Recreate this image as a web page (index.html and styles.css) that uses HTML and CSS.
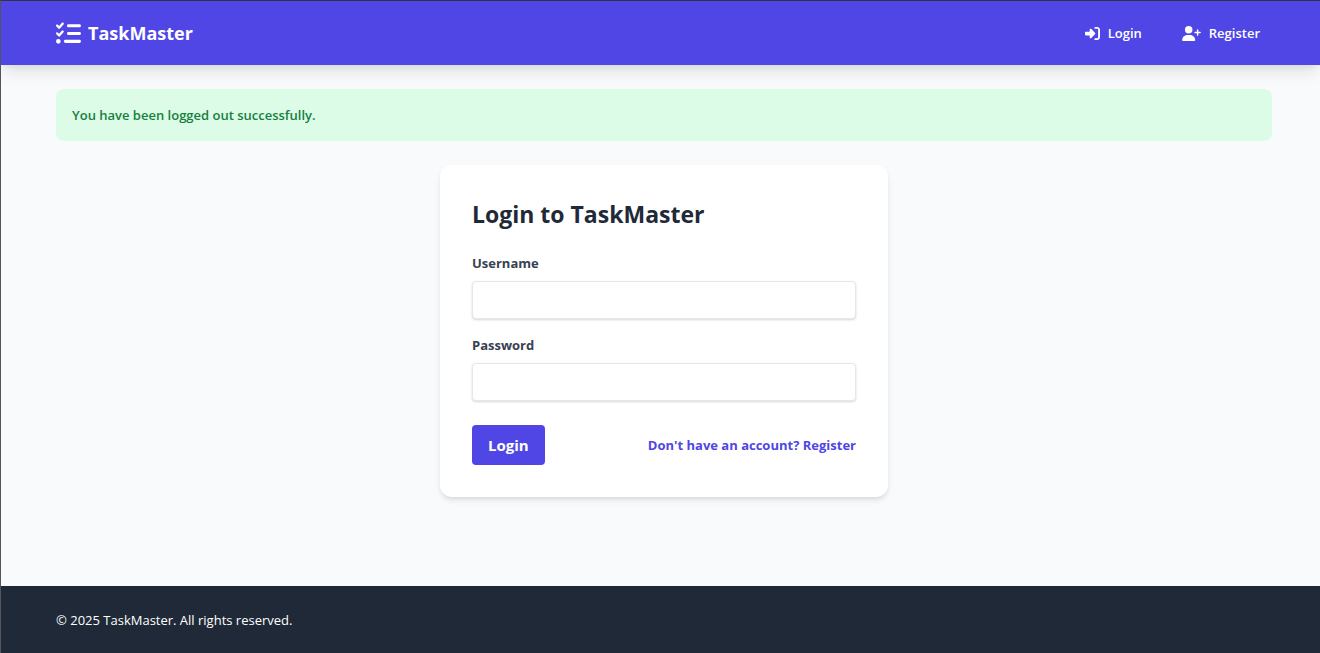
FILE: index.html
```html
<!DOCTYPE html>
<html lang="en">
<head>
<meta charset="utf-8">
<meta name="viewport" content="width=device-width, initial-scale=1">
<title>Login - TaskMaster</title>
<link rel="stylesheet" href="styles.css">
</head>
<body class="page">
<header class="navbar">
  <div class="container navbar-inner">
    <a class="brand" href="#">
      <svg class="brand-icon" viewBox="0 0 512 512" aria-hidden="true"><path d="M152.1 38.2c9.9 8.9 10.7 24 1.8 33.9l-72 80c-4.4 4.9-10.6 7.8-17.2 7.9s-12.9-2.4-17.6-7L7 113C-2.3 103.6-2.3 88.4 7 79s24.6-9.4 33.9 0l22.1 22.1 55.1-61.2c8.9-9.9 24-10.7 33.9-1.8zm0 160c9.9 8.9 10.7 24 1.8 33.9l-72 80c-4.4 4.9-10.6 7.8-17.2 7.9s-12.9-2.4-17.6-7L7 273c-9.4-9.4-9.4-24.6 0-33.9s24.6-9.4 33.9 0l22.1 22.1 55.1-61.2c8.9-9.9 24-10.7 33.9-1.8zM224 96c0-17.7 14.3-32 32-32H480c17.7 0 32 14.3 32 32s-14.3 32-32 32H256c-17.7 0-32-14.3-32-32zm0 160c0-17.7 14.3-32 32-32H480c17.7 0 32 14.3 32 32s-14.3 32-32 32H256c-17.7 0-32-14.3-32-32zM160 416c0-17.7 14.3-32 32-32H480c17.7 0 32 14.3 32 32s-14.3 32-32 32H192c-17.7 0-32-14.3-32-32zM48 368a48 48 0 1 1 0 96 48 48 0 1 1 0-96z"/></svg>
      <span>TaskMaster</span>
    </a>
    <nav class="nav-links">
      <a class="nav-link" href="#">
        <svg class="nav-icon" viewBox="0 0 512 512" aria-hidden="true"><path d="M217.9 105.9L340.7 228.7c7.2 7.2 11.3 17.1 11.3 27.3s-4.1 20.1-11.3 27.3L217.9 406.1c-6.4 6.4-15 9.9-24 9.9c-18.7 0-33.9-15.2-33.9-33.9l0-62.1L32 320c-17.7 0-32-14.3-32-32l0-64c0-17.7 14.3-32 32-32l128 0 0-62.1c0-18.7 15.2-33.9 33.9-33.9c9 0 17.6 3.6 24 9.9zM352 416l64 0c17.7 0 32-14.3 32-32l0-256c0-17.7-14.3-32-32-32l-64 0c-17.7 0-32-14.3-32-32s14.3-32 32-32l64 0c53 0 96 43 96 96l0 256c0 53-43 96-96 96l-64 0c-17.7 0-32-14.3-32-32s14.3-32 32-32z"/></svg>
        <span>Login</span>
      </a>
      <a class="nav-link" href="#">
        <svg class="nav-icon nav-icon-wide" viewBox="0 0 640 512" aria-hidden="true"><path d="M96 128a128 128 0 1 1 256 0A128 128 0 1 1 96 128zM0 482.3C0 383.8 79.8 304 178.3 304h91.4C368.2 304 448 383.8 448 482.3c0 16.4-13.3 29.7-29.7 29.7H29.7C13.3 512 0 498.7 0 482.3zM504 312V248H440c-13.3 0-24-10.7-24-24s10.7-24 24-24h64V136c0-13.3 10.7-24 24-24s24 10.7 24 24v64h64c13.3 0 24 10.7 24 24s-10.7 24-24 24H552v64c0 13.3-10.7 24-24 24s-24-10.7-24-24z"/></svg>
        <span>Register</span>
      </a>
    </nav>
  </div>
</header>
<main class="container main">
  <p class="alert" role="status">You have been logged out successfully.</p>
  <section class="card">
    <h1 class="card-title">Login to TaskMaster</h1>
    <form class="form">
      <div class="field">
        <label class="label" for="username">Username</label>
        <input class="input" id="username" name="username" type="text">
      </div>
      <div class="field">
        <label class="label" for="password">Password</label>
        <input class="input" id="password" name="password" type="password">
      </div>
      <div class="actions">
        <button class="button" type="submit">Login</button>
        <a class="register-link" href="#">Don't have an account? Register</a>
      </div>
    </form>
  </section>
</main>
<footer class="footer">
  <div class="container">
    <p class="copyright">© 2025 TaskMaster. All rights reserved.</p>
  </div>
</footer>
</body>
</html>
```
FILE: styles.css
```css
*, *::before, *::after { box-sizing: border-box; }

.page {
  margin: 0;
  min-height: 100vh;
  display: flex;
  flex-direction: column;
  border-top: 1px solid #35323f;
  border-left: 1px solid #57535c;
  background: #f9fafb;
  color: #1f2937;
  font-family: "Segoe UI", "Open Sans", "Noto Sans", sans-serif;
  font-size: 14px;
  line-height: 20px;
}

.container {
  width: 100%;
  padding: 0 48px 0 55px;
}

.navbar {
  background: #4f46e5;
  color: #fff;
  box-shadow: 0 10px 15px -3px rgba(0, 0, 0, 0.1), 0 4px 6px -2px rgba(0, 0, 0, 0.05);
}

.navbar-inner {
  display: flex;
  align-items: center;
  justify-content: space-between;
  height: 64px;
}

.brand {
  display: flex;
  align-items: center;
  gap: 7px;
  color: inherit;
  text-decoration: none;
  font-size: 18px;
  line-height: 28px;
  font-weight: 700;
}

.brand-icon { width: 25px; height: 25px; fill: currentColor; }

.nav-links { display: flex; gap: 16px; }

.nav-link {
  display: flex;
  align-items: center;
  gap: 8px;
  padding: 8px 12px;
  color: inherit;
  text-decoration: none;
  font-size: 13px;
  font-weight: 600;
}

.nav-icon { width: 15px; height: 15px; fill: currentColor; }
.nav-icon-wide { width: 19px; }

.main { flex: 1; padding-top: 24px; padding-bottom: 24px; }

.alert {
  margin: 0 0 24px;
  padding: 16px;
  border-radius: 8px;
  background: #dcfce7;
  color: #15803d;
  font-size: 13px;
  font-weight: 600;
}

.card {
  max-width: 448px;
  margin: 0 auto;
  padding: 32px;
  border-radius: 12px;
  background: #fff;
  box-shadow: 0 4px 6px -1px rgba(0, 0, 0, 0.1), 0 2px 4px -1px rgba(0, 0, 0, 0.06);
}

.card-title {
  margin: 0 0 22px;
  font-size: 23px;
  line-height: 34px;
  font-weight: 700;
}

.field { margin-bottom: 16px; }

.label {
  display: block;
  margin-bottom: 8px;
  color: #374151;
  font-size: 13px;
  line-height: 20px;
  font-weight: 700;
}

.input {
  display: block;
  width: 100%;
  height: 38px;
  padding: 8px 12px;
  border: 1px solid #e5e7eb;
  border-radius: 4px;
  background: #fff;
  box-shadow: 0 1px 3px rgba(0, 0, 0, 0.1), 0 1px 2px rgba(0, 0, 0, 0.06);
  color: #374151;
  font: inherit;
}

.actions {
  display: flex;
  align-items: center;
  justify-content: space-between;
  padding-top: 8px;
}

.button {
  padding: 8px 16px;
  border: 0;
  border-radius: 4px;
  background: #4f46e5;
  color: #fff;
  font-family: inherit;
  font-size: 15px;
  line-height: 24px;
  font-weight: 700;
}

.register-link {
  color: #4f46e5;
  font-size: 13px;
  font-weight: 700;
  text-decoration: none;
}

.footer { padding: 24px 0 23px; background: #1f2937; color: #fff; }

.copyright { margin: 0; font-size: 13px; }
```
